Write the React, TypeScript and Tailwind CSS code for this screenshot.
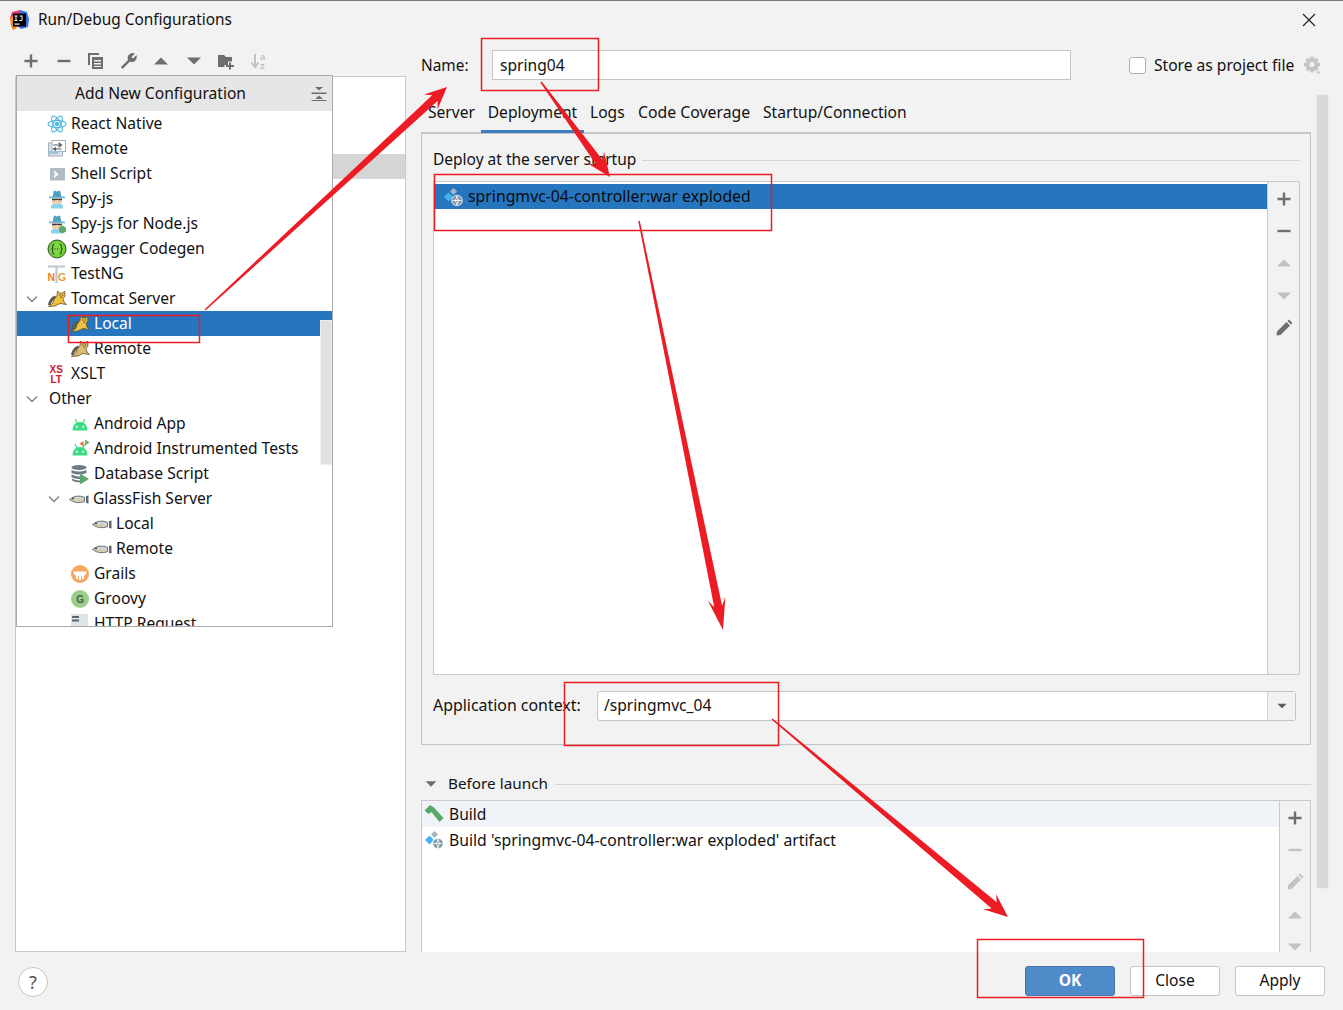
import type { ReactNode } from 'react';

const S = 'h-5 w-5 shrink-0';

function IdeaLogo() {
  return (
    <svg viewBox="0 0 20 20" className="h-5 w-5">
      <path d="M3 2 L11 0 L14 3 L4 12 L1 8 Z" fill="#f0386b" />
      <path d="M11 0 L18 2 L20 9 L19 17 L12 19 L8 16 Z" fill="#3a6fe8" />
      <path d="M1 8 L4 6 L8 18 L4 20 L2 16 Z" fill="#f58a1f" />
      <rect x="4" y="3.500" width="13" height="13" fill="#000" />
      <rect x="5.500" y="13.500" width="5" height="1.200" fill="#fff" />
      <path d="M5.500 5.500 h3 v1 h-1 v3.500 h1 v1 h-3 v-1 h1 v-3.500 h-1 Z M10.500 5.500 h3 v4.500 q0 1 -1.200 1 h-2 v-1 h1.700 q.5 0 .5 -.5 v-3 h-2 Z" fill="#fff" />
    </svg>
  );
}

function ReactIcon() {
  return (
    <svg viewBox="0 0 20 20" className={S} fill="none" stroke="#53b9e0" strokeWidth="1.100">
      <ellipse cx="10" cy="10" rx="9" ry="3.600" />
      <ellipse cx="10" cy="10" rx="9" ry="3.600" transform="rotate(60 10 10)" />
      <ellipse cx="10" cy="10" rx="9" ry="3.600" transform="rotate(120 10 10)" />
      <circle cx="10" cy="10" r="1.700" fill="#53b9e0" />
    </svg>
  );
}

function RemoteIcon() {
  return (
    <svg viewBox="0 0 20 20" className={S}>
      <rect x="1.500" y="4" width="14" height="13" fill="#dbe3e8" stroke="#a3aeb6" />
      <rect x="5" y="1.500" width="13.500" height="11" fill="#fff" stroke="#a3aeb6" />
      <rect x="1.500" y="12" width="10" height="3" fill="#9cc4dc" />
      <path d="M6.500 6 h8 M11.500 3.800 l3 2.200 l-3 2.200 M14.500 10 h-8 M9 8.500 l-2.500 1.500 l2.500 1.500" fill="none" stroke="#4d5a63" strokeWidth="1.200" />
    </svg>
  );
}

function ShellIcon() {
  return (
    <svg viewBox="0 0 20 20" className={S}>
      <rect x="3" y="4" width="15" height="12.500" fill="#b0bcc4" />
      <path d="M7 6.500 L11.500 10.200 L7 14 V11.500 L8.500 10.200 L7 9 Z" fill="#fff" />
    </svg>
  );
}

function SpyIcon({ node }: { node?: boolean }) {
  return (
    <svg viewBox="0 0 20 20" className={S}>
      <path d="M5.500 8 L7 1.500 L10 2.500 L13 1.500 L14.500 8 Z" fill="#4f9fc4" />
      <rect x="2" y="7.500" width="16" height="1.800" fill="#6ab8d8" />
      <path d="M5 9 H15 V14 Q10 17 5 14 Z" fill="#eed0ac" />
      <path d="M5 9.700 H15 V11.300 H11.500 L10 10.700 L8.500 11.300 H5 Z" fill="#3a3a3a" />
      <path d="M4 19.500 V16.500 L7 14.500 Q10 16 13 14.500 L16 16.500 V19.500 Z" fill="#8fd3ea" />
      {node && <path d="M15.500 11.500 L19 13.500 V17.500 L15.500 19.500 L12 17.500 V13.500 Z" fill="#5ea86b" />}
    </svg>
  );
}

function SwaggerIcon() {
  return (
    <svg viewBox="0 0 20 20" className={S}>
      <circle cx="10" cy="10" r="9" fill="#6fcf2f" stroke="#35503a" strokeWidth="1" />
      <circle cx="10" cy="10" r="6.800" fill="#7fd83f" />
      <path d="M7.500 5 Q5.700 5 5.700 7 V9 L4.800 10 L5.700 11 V13 Q5.700 15 7.500 15 M12.500 5 Q14.300 5 14.300 7 V9 L15.200 10 L14.300 11 V13 Q14.300 15 12.500 15" fill="none" stroke="#24452a" strokeWidth="1.100" />
      <path d="M7.500 10 h5" stroke="#24452a" strokeWidth="1.200" strokeDasharray="1.200 1.200" />
    </svg>
  );
}

function TestNgIcon() {
  return (
    <svg viewBox="0 0 20 20" className={S}>
      <path d="M1 2.500 H18" stroke="#c2cbd1" strokeWidth="2.200" />
      <path d="M9.500 2.500 V19" stroke="#c2cbd1" strokeWidth="2.400" />
      <text x="0.500" y="17" fontSize="10.500" fontWeight="700" fill="#f07a1f" fontFamily="Liberation Sans, sans-serif">N</text>
      <text x="11" y="17" fontSize="10.500" fontWeight="700" fill="#e0a23a" fontFamily="Liberation Sans, sans-serif">G</text>
    </svg>
  );
}

function TomcatIcon({ dim }: { dim?: boolean }) {
  return (
    <svg viewBox="0 0 20 20" className={S}>
      <path d="M1 16 Q2 9 8 6.500 L9.500 9 Q5 11 3.500 16 Z" fill="#5b5b4e" />
      <path d="M7 10.500 L10 6.500 L10.500 2 L12.500 4 H15.500 L17.500 2 L18 7 L16 9.500 L17 13 L19.500 15.500 L13 14.500 L8 17 L1.500 17.500 L6 14 Z" fill={dim ? '#dcbc6e' : '#efc13f'} stroke="#5f5228" strokeWidth="0.800" />
      <path d="M12.300 6 h1.300 M15 6 h1.300 M13.500 8 h1.500" stroke="#222" strokeWidth="0.900" />
    </svg>
  );
}

function XsltIcon() {
  return (
    <svg viewBox="0 0 20 20" className={S}>
      <text x="2.500" y="9" fontSize="10" fontWeight="700" fill="#c8202a" fontFamily="Liberation Sans, sans-serif">XS</text>
      <text x="3.500" y="19" fontSize="10" fontWeight="700" fill="#c8202a" fontFamily="Liberation Sans, sans-serif">LT</text>
    </svg>
  );
}

function AndroidIcon({ tests }: { tests?: boolean }) {
  return (
    <svg viewBox="0 0 20 20" className={S}>
      <path d="M2.500 16.500 Q2.800 8 10 8 Q17.200 8 17.500 16.500 Z" fill="#3ddc84" />
      <path d="M5 5 L7.500 9.500 M15 5 L12.500 9.500" stroke="#3ddc84" strokeWidth="1.200" />
      <circle cx="6.800" cy="12.800" r="1" fill="#fff" />
      <circle cx="13.200" cy="12.800" r="1" fill="#fff" />
      {tests && (
        <>
          <path d="M13.500 2 V7.500 L9.500 4.800 Z" fill="#ef6c3a" />
          <path d="M15 0.500 L19.500 3.500 L15 6.500 Z" fill="#68b06c" />
        </>
      )}
    </svg>
  );
}

function DbIcon() {
  return (
    <svg viewBox="0 0 20 20" className={S}>
      <ellipse cx="9" cy="3.500" rx="7.500" ry="2.500" fill="#6e7b84" />
      <path d="M1.500 6 Q9 9 16.500 6 V9 Q9 12 1.500 9 Z" fill="#6e7b84" />
      <path d="M1.500 10.500 Q6 12.700 10 12.500 V15 Q5 15.300 1.500 13.300 Z M2 14.700 Q6 16.700 10 16.500 V18.500 Q5 18.500 2 16.500 Z" fill="#6e7b84" />
      <path d="M10 9.500 L19 15 L10 20.500 Z" fill="#59a869" />
    </svg>
  );
}

function FishIcon() {
  return (
    <svg viewBox="0 0 20 20" className={S}>
      <path d="M0.500 10.500 Q7 5 15.500 8.300 L15.500 12.700 Q7 15.500 0.500 10.500 Z" fill="#ced3d7" stroke="#5f666b" strokeWidth="0.900" />
      <path d="M17 7 L19.500 6.500 V14.500 L17 14 Z" fill="#5f666b" />
      <path d="M4.500 11.500 H14" stroke="#e3c88e" strokeWidth="1.500" />
      <circle cx="4" cy="9.500" r=".9" fill="#333" />
    </svg>
  );
}

function GrailsIcon() {
  return (
    <svg viewBox="0 0 20 20" className={S}>
      <circle cx="10" cy="10" r="9" fill="#f7a660" />
      <path d="M3.500 7.500 H16.500 Q16.500 11 14 11.500 V15 H12 V12 H11 V16 H9 V12 H8 V15 H6 V11.500 Q3.500 11 3.500 7.500 Z" fill="#fff" />
    </svg>
  );
}

function GroovyIcon() {
  return (
    <svg viewBox="0 0 20 20" className={S}>
      <circle cx="10" cy="10" r="9" fill="#9ccc8c" />
      <text x="6.300" y="13.500" fontSize="10" fontWeight="700" fill="#45603f" fontFamily="Liberation Sans, sans-serif">G</text>
    </svg>
  );
}

function HttpIcon() {
  return (
    <svg viewBox="0 0 20 20" className={S}>
      <rect x="1" y="0" width="17" height="13" fill="#dfe4e8" />
      <rect x="2" y="2" width="7" height="2" fill="#5b6770" />
      <rect x="2" y="5.500" width="7" height="2" fill="#5b6770" />
      <rect x="0" y="14" width="20" height="1" fill="#8fc0de" />
    </svg>
  );
}

function ArtifactIcon({ selected }: { selected?: boolean }) {
  return (
    <svg viewBox="0 0 20 20" className={S}>
      <path d="M1 10 L5.500 5.500 L10 10 L5.500 14.500 Z" fill="#47b2f0" />
      <path d="M7 4.500 L10.500 1 L14 4.500 L10.500 8 Z" fill="#a8b6c0" />
      <circle cx="14" cy="13.500" r="5.800" fill={selected ? '#d8e4ee' : '#fff'} />
      <circle cx="14" cy="13.500" r="4.800" fill="#7f97a8" />
      <path d="M9.500 13.500 H18.500 M14 9 Q11 13.500 14 18 M14 9 Q17 13.500 14 18" stroke="#fff" strokeWidth=".8" fill="none" />
    </svg>
  );
}

function HammerIcon() {
  return (
    <svg viewBox="0 0 20 20" className={S}>
      <path d="M0.500 6.500 L6 1 L10 3.500 L19.500 14 L15.500 18 L7.500 8 L4.500 10 Z" fill="#59a869" />
    </svg>
  );
}

function Chevron() {
  return (
    <svg viewBox="0 0 16 16" className="h-4 w-4" fill="none" stroke="#7f7f7f" strokeWidth="1.300">
      <path d="M3 5.500 L8 10.500 L13 5.500" />
    </svg>
  );
}

function Glyph({ kind, color, size = 'h-[18px] w-[18px]' }: { kind: string; color: string; size?: string }) {
  return (
    <svg viewBox="0 0 18 18" className={size} fill={color}>
      {kind === 'plus' && <path d="M7.800 2.500 H10.200 V7.800 H15.500 V10.200 H10.200 V15.500 H7.800 V10.200 H2.500 V7.800 H7.800 Z" />}
      {kind === 'minus' && <rect x="2.500" y="7.800" width="13" height="2.400" />}
      {kind === 'up' && <path d="M2 12.500 L9 5.500 L16 12.500 Z" />}
      {kind === 'down' && <path d="M2 5.500 L9 12.500 L16 5.500 Z" />}
      {kind === 'pencil' && <path d="M1.500 16.500 L2 12.500 L11.500 3 L15 6.500 L5.500 16 Z M12.500 2 L14 0.500 L17.500 4 L16 5.500 Z" />}
      {kind === 'copy' && <path d="M1 1 H12 V3 H3 V13 H1 Z M5 5 H16 V17 H5 Z M7 8 V9.500 H14 V8 Z M7 11 V12.500 H14 V11 Z M7 14 V15 H14 V14 Z" fillRule="evenodd" />}
      {kind === 'wrench' && <path d="M1 15 L8 8 Q6.500 3.500 10.500 1.500 Q12.500 .5 15 1.500 L11.500 5 L13 6.500 L16.500 3 Q17.500 6 15.500 8.500 Q13 11 10 9.500 L3 16.500 Q1.500 17 1 15 Z" />}
      {kind === 'folder' && <path d="M1 3 H7 L9 5 H15 V9.500 H11 V13 H7.500 V15 H1 Z M12 10.500 H14 V13 H17 V15 H14 V17.500 H12 V15 H9 V13 H12 Z" />}
      {kind === 'gear' && <path fillRule="evenodd" d="M7.500 .5 H10.500 L11 3 L13.300 1.800 L15.500 4 L14.200 6.300 L17 7 V10 L14.500 10.700 L15.500 13 L13.500 15 L11 14 L10.500 16.500 H7.500 L7 14 L4.700 15.200 L2.500 13 L3.800 10.700 L1 10 V7 L3.800 6.300 L2.500 4 L4.700 1.800 L7 3 Z M9 6 A2.500 2.500 0 1 0 9 11 A2.500 2.500 0 1 0 9 6 Z M13 15.500 H18 L15.500 18 Z" />}
    </svg>
  );
}

function SortIcon() {
  return (
    <svg viewBox="0 0 18 18" className="h-[18px] w-[18px]">
      <path d="M5 2 V14 M1.500 10.500 L5 15 L8.500 10.500" fill="none" stroke="#c2c2c2" strokeWidth="2" />
      <text x="10" y="8" fontSize="9.500" fontWeight="700" fill="#c2c2c2" fontFamily="Liberation Sans, sans-serif">a</text>
      <text x="10" y="17" fontSize="9.500" fontWeight="700" fill="#c2c2c2" fontFamily="Liberation Sans, sans-serif">z</text>
    </svg>
  );
}

function CollapseIcon() {
  return (
    <svg viewBox="0 0 16 16" className="h-4 w-4" fill="#6e6e6e">
      <path d="M4 1 H12 L8 4.500 Z M0.500 6.500 H15.500 V8 H0.500 Z M8 9.500 L12 13 H4 Z M0.500 14 H15.500 V15 H0.500 Z" />
    </svg>
  );
}

type Row = { label: string; pad: string; icon?: ReactNode; open?: boolean; active?: boolean };

const rows: Row[] = [
  { label: 'React Native', pad: 'pl-[30px]', icon: <ReactIcon /> },
  { label: 'Remote', pad: 'pl-[30px]', icon: <RemoteIcon /> },
  { label: 'Shell Script', pad: 'pl-[30px]', icon: <ShellIcon /> },
  { label: 'Spy-js', pad: 'pl-[30px]', icon: <SpyIcon /> },
  { label: 'Spy-js for Node.js', pad: 'pl-[30px]', icon: <SpyIcon node /> },
  { label: 'Swagger Codegen', pad: 'pl-[30px]', icon: <SwaggerIcon /> },
  { label: 'TestNG', pad: 'pl-[30px]', icon: <TestNgIcon /> },
  { label: 'Tomcat Server', pad: 'pl-[7px]', icon: <TomcatIcon />, open: true },
  { label: 'Local', pad: 'pl-[53px]', icon: <TomcatIcon />, active: true },
  { label: 'Remote', pad: 'pl-[53px]', icon: <TomcatIcon dim /> },
  { label: 'XSLT', pad: 'pl-[30px]', icon: <XsltIcon /> },
  { label: 'Other', pad: 'pl-[7px]', open: true },
  { label: 'Android App', pad: 'pl-[53px]', icon: <AndroidIcon /> },
  { label: 'Android Instrumented Tests', pad: 'pl-[53px]', icon: <AndroidIcon tests /> },
  { label: 'Database Script', pad: 'pl-[53px]', icon: <DbIcon /> },
  { label: 'GlassFish Server', pad: 'pl-[29px]', icon: <FishIcon />, open: true },
  { label: 'Local', pad: 'pl-[75px]', icon: <FishIcon /> },
  { label: 'Remote', pad: 'pl-[75px]', icon: <FishIcon /> },
  { label: 'Grails', pad: 'pl-[53px]', icon: <GrailsIcon /> },
  { label: 'Groovy', pad: 'pl-[53px]', icon: <GroovyIcon /> },
  { label: 'HTTP Request', pad: 'pl-[53px]', icon: <HttpIcon /> },
];

function TreeRow({ row }: { row: Row }) {
  return (
    <div className={`flex h-[25px] shrink-0 items-center ${row.pad} ${row.active ? 'bg-[#2675bf] text-white' : ''}`}>
      {row.open && (
        <span className="flex w-[23px] shrink-0 pr-[7px]">
          <Chevron />
        </span>
      )}
      {row.icon ? <span className="flex w-[24px] shrink-0">{row.icon}</span> : <span className="w-[2px]" />}
      <span className="whitespace-nowrap">{row.label}</span>
    </div>
  );
}

function AddConfigPopup() {
  return (
    <div className="absolute left-[16px] top-[74px] flex h-[552px] w-[317px] flex-col overflow-hidden border border-[#a9a9a9] bg-white">
      <div className="flex h-[35px] shrink-0 items-center justify-between bg-[#e6e6e6] pl-[58px] pr-[5px]">
        <span>Add New Configuration</span>
        <CollapseIcon />
      </div>
      {rows.map((row, i) => (
        <TreeRow key={i} row={row} />
      ))}
      <div className="absolute left-[303px] top-[244px] h-[145px] w-[12px] border border-[#eeeeee] bg-[#e0e0e0]" />
    </div>
  );
}

function SideTools({ items, className }: { items: [string, string][]; className: string }) {
  return (
    <div className={`flex shrink-0 flex-col items-center border-l border-[#c9c9c9] bg-[#f2f2f2] pt-[0.500px] ${className}`}>
      {items.map(([kind, color], i) => (
        <span key={i} className="flex h-[32.400px] shrink-0 items-center">
          <Glyph kind={kind} color={color} />
        </span>
      ))}
    </div>
  );
}

function arrowPoints(x1: number, y1: number, x2: number, y2: number, w1: number, w2: number, head: number, wing: number) {
  const len = Math.hypot(x2 - x1, y2 - y1);
  const ux = (x2 - x1) / len;
  const uy = (y2 - y1) / len;
  const nx = -uy;
  const ny = ux;
  const p = (along: number, off: number) => `${x1 + ux * along + nx * off},${y1 + uy * along + ny * off}`;
  return [
    p(0, w1 / 2),
    p(len - head * 0.75, w2 / 2),
    p(len - head, wing),
    p(len, 0),
    p(len - head, -wing),
    p(len - head * 0.75, -w2 / 2),
    p(0, -w1 / 2),
  ].join(' ');
}

function Annotations() {
  return (
    <svg className="pointer-events-none absolute left-0 top-[-1px] z-20" width="1343" height="1010">
      <g fill="none" stroke="#ed1c24" strokeWidth="1.500">
        <rect x="481.500" y="38.500" width="117" height="52" />
        <rect x="434.500" y="174.500" width="337" height="56" />
        <rect x="68.500" y="315.500" width="131" height="27" />
        <rect x="564.500" y="682.500" width="214" height="63" />
        <rect x="977.500" y="939.500" width="166" height="58" />
      </g>
      <g fill="#ed1c24">
        <polygon points={arrowPoints(205, 310, 447, 87, 1.500, 8, 22, 10)} />
        <polygon points={arrowPoints(541, 82, 610, 177, 1.500, 8, 24, 10)} />
        <polygon points={arrowPoints(639, 221, 723, 630, 1.500, 8, 32, 9)} />
        <polygon points={arrowPoints(772, 719, 1008, 917, 1.500, 8, 24, 10)} />
      </g>
    </svg>
  );
}

export default function App() {
  return (
    <div className="relative flex h-[1010px] w-[1343px] flex-col overflow-hidden border-t border-[#7a7a7a] bg-[#f2f2f2] text-[15.600px] leading-none text-[#111] [font-family:'Noto_Sans',sans-serif]">
      <div className="flex h-[38px] shrink-0 items-center justify-between pl-[9px] pr-[26px]">
        <div className="flex items-center gap-[9px]">
          <IdeaLogo />
          <span className="text-[15.400px]">Run/Debug Configurations</span>
        </div>
        <svg viewBox="0 0 16 16" className="h-4 w-4" fill="none" stroke="#222" strokeWidth="1.200">
          <path d="M2 2 L14 14 M14 2 L2 14" />
        </svg>
      </div>

      <div className="flex h-[913px] shrink-0 overflow-hidden">
        <aside className="ml-[15px] flex w-[391px] shrink-0 flex-col">
          <div className="flex h-[37px] shrink-0 items-center pt-[7px]">
            {['plus', 'minus', 'copy', 'wrench', 'up', 'down', 'folder'].map((k) => (
              <span key={k} className="flex w-[32.500px] justify-center">
                <Glyph kind={k} color="#6e6e6e" />
              </span>
            ))}
            <span className="flex w-[32.500px] justify-center">
              <SortIcon />
            </span>
          </div>
          <div className="flex-1 border border-[#c9c9c9] bg-white pt-[77px]">
            <div className="h-[25px] bg-[#d5d5d5]" />
          </div>
        </aside>

        <main className="ml-[15px] flex min-w-0 flex-1 flex-col">
          <div className="mt-[11px] flex h-[30px] shrink-0 items-center">
            <span className="w-[71px] pt-px text-[15.400px]">Name:</span>
            <div className="flex h-[30px] w-[579px] items-center border border-[#c4c4c4] bg-white pl-[7px] pt-px">spring04</div>
            <span className="ml-[58px] h-[17px] w-[17px] rounded-[3px] border border-[#b0b0b0] bg-white" />
            <span className="ml-[8px] whitespace-nowrap pt-px">Store as project file</span>
            <span className="ml-[9px]">
              <Glyph kind="gear" color="#c4c4c4" />
            </span>
          </div>

          <div className="relative z-10 -mb-px mt-[20px] flex h-[33px] w-[890px] shrink-0">
            <span className="flex w-[60px] items-start pl-[7px] pt-[5px]">Server</span>
            <span className="flex w-[103px] items-start justify-center border-b-[3px] border-[#3c7fc4] pt-[5px]">Deployment</span>
            <span className="ml-[6px] w-[48px] pt-[5px]">Logs</span>
            <span className="w-[125px] whitespace-nowrap pt-[5px] text-[15.800px]">Code Coverage</span>
            <span className="pt-[5px]">Startup/Connection</span>
          </div>

          <section className="flex h-[613px] w-[890px] shrink-0 flex-col border border-t-2 border-[#c4c4c4] pl-[11px] pr-[10px]">
            <div className="mt-[15px] flex h-[22px] shrink-0 items-center gap-[6px]">
              <span className="text-[15.500px]">Deploy at the server startup</span>
              <span className="h-px flex-1 bg-[#d4d4d4]" />
            </div>
            <div className="mt-[10px] flex h-[494px] shrink-0 border border-[#c9c9c9] bg-white">
              <div className="flex-1 pt-[2px]">
                <div className="flex h-[25px] items-center bg-[#2675bf] pl-[9px] text-[#0c0c0c]">
                  <span className="flex w-[25px]">
                    <ArtifactIcon selected />
                  </span>
                  <span className="pt-px text-[15.800px]">springmvc-04-controller:war exploded</span>
                </div>
              </div>
              <SideTools
                className="w-[32px]"
                items={[['plus', '#6e6e6e'], ['minus', '#6e6e6e'], ['up', '#c2c2c2'], ['down', '#c2c2c2'], ['pencil', '#6e6e6e']]}
              />
            </div>
            <div className="mt-[16px] flex h-[30px] shrink-0 items-center">
              <span className="w-[164px] whitespace-nowrap text-[15.900px]">Application context:</span>
              <div className="flex h-[30px] w-[699px] rounded-[3px] border border-[#c4c4c4] bg-white">
                <span className="flex flex-1 items-center pl-[6px]">/springmvc_04</span>
                <span className="flex w-[28px] items-center justify-center border-l border-[#d4d4d4] bg-[#f2f2f2]">
                  <Glyph kind="down" color="#5a5a5a" size="h-[12px] w-[12px]" />
                </span>
              </div>
            </div>
          </section>

          <div className="mt-[28px] flex h-[22px] w-[890px] shrink-0 items-center">
            <span className="ml-[3px] flex w-[24px]">
              <Glyph kind="down" color="#6e6e6e" size="h-[14px] w-[14px]" />
            </span>
            <span className="whitespace-nowrap text-[15.300px]">Before launch</span>
            <span className="ml-[7px] h-px flex-1 bg-[#d4d4d4]" />
          </div>
          <div className="mt-[5px] flex h-[170px] w-[890px] shrink-0 border border-[#c9c9c9] bg-white">
            <div className="flex-1">
              <div className="flex h-[26px] items-center bg-[#f0f4f9] pl-[2px]">
                <span className="flex w-[25px]">
                  <HammerIcon />
                </span>
                <span className="pt-[2px]">Build</span>
              </div>
              <div className="flex h-[26px] items-center pl-[2px]">
                <span className="flex w-[25px]">
                  <ArtifactIcon />
                </span>
                <span className="pt-px text-[15.750px]">Build 'springmvc-04-controller:war exploded' artifact</span>
              </div>
            </div>
            <SideTools
              className="w-[31px]"
              items={[['plus', '#6e6e6e'], ['minus', '#c2c2c2'], ['pencil', '#c2c2c2'], ['up', '#c2c2c2'], ['down', '#c2c2c2']]}
            />
          </div>
        </main>
      </div>

      <footer className="relative z-10 flex flex-1 items-start justify-between bg-[#f2f2f2] pl-[18px] pr-[18px] pt-[14px]">
        <span className="mt-px flex h-[30px] w-[30px] items-center justify-center rounded-full border border-[#c4c4c4] bg-white text-[18px] text-[#555]">?</span>
        <div className="flex gap-[15px]">
          <span className="flex h-[30px] w-[90px] items-center justify-center rounded-[3px] border border-[#4675a8] bg-[#4f8ac9] font-bold text-white">OK</span>
          <span className="flex h-[30px] w-[90px] items-center justify-center rounded-[3px] border border-[#c4c4c4] bg-white">Close</span>
          <span className="flex h-[30px] w-[90px] items-center justify-center rounded-[3px] border border-[#c4c4c4] bg-white">Apply</span>
        </div>
      </footer>

      <AddConfigPopup />
      <div className="absolute left-[1316px] top-[93px] h-[795px] w-[13px] border border-[#ececec] bg-[#d8d8d8]" />
      <Annotations />
    </div>
  );
}
